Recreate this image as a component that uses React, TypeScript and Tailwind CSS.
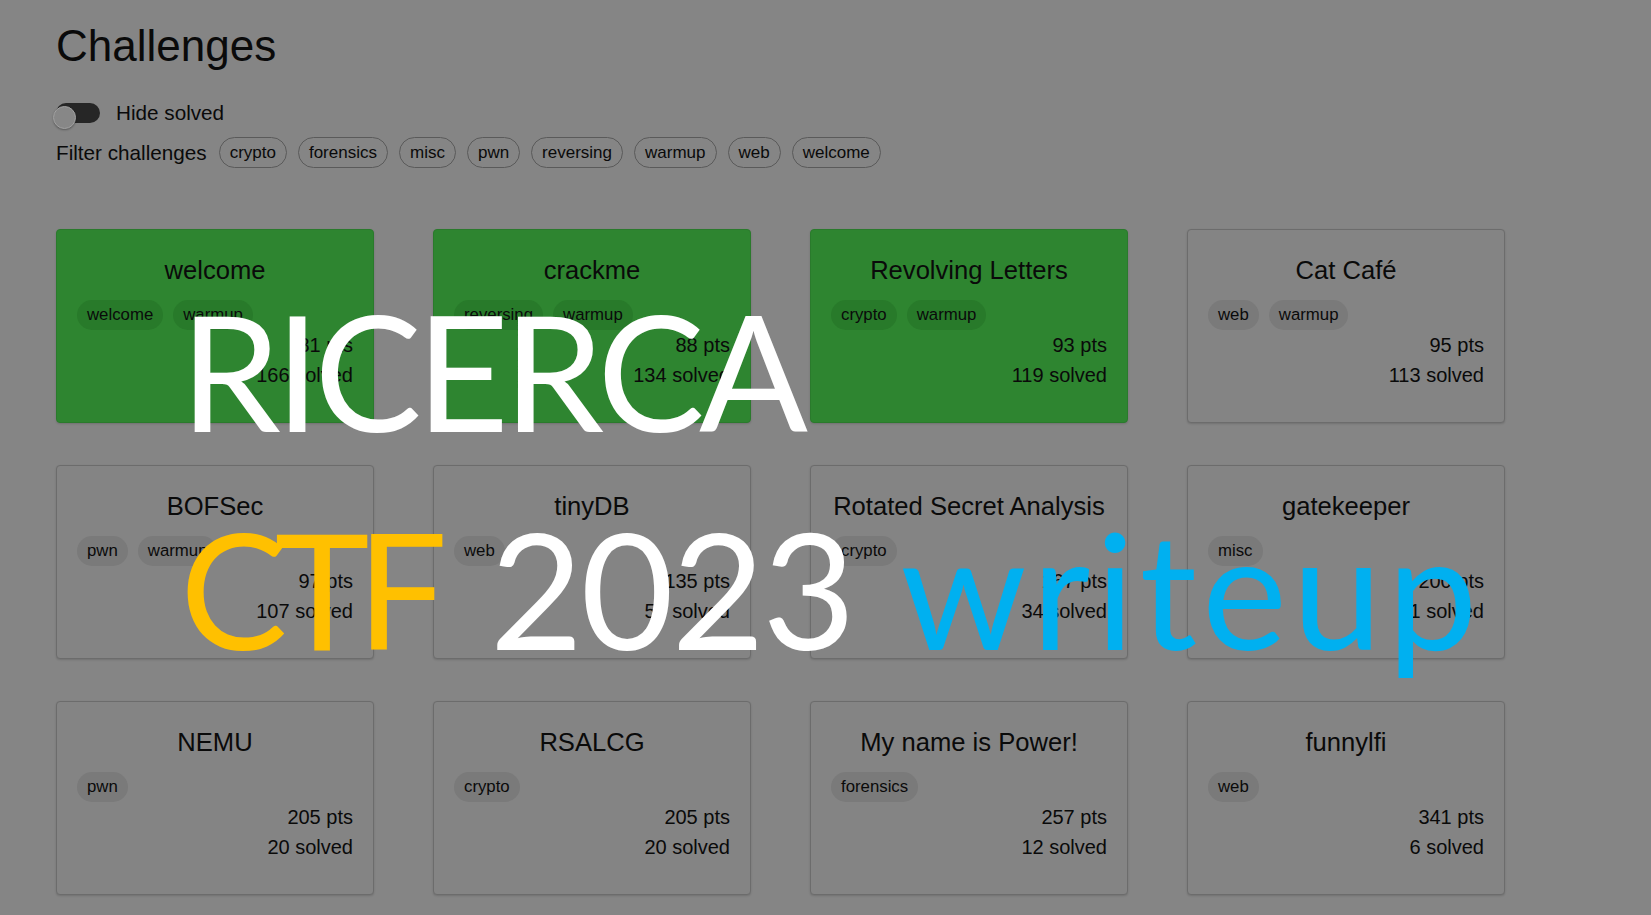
import React from "react";

type Card = { title: string; tags: string[]; pts: string; solved: string; done?: boolean };

const cards: Card[] = [
  { title: "welcome", tags: ["welcome", "warmup"], pts: "81", solved: "166", done: true },
  { title: "crackme", tags: ["reversing", "warmup"], pts: "88", solved: "134", done: true },
  { title: "Revolving Letters", tags: ["crypto", "warmup"], pts: "93", solved: "119", done: true },
  { title: "Cat Café", tags: ["web", "warmup"], pts: "95", solved: "113" },
  { title: "BOFSec", tags: ["pwn", "warmup"], pts: "97", solved: "107" },
  { title: "tinyDB", tags: ["web"], pts: "135", solved: "57" },
  { title: "Rotated Secret Analysis", tags: ["crypto"], pts: "167", solved: "34" },
  { title: "gatekeeper", tags: ["misc"], pts: "200", solved: "21" },
  { title: "NEMU", tags: ["pwn"], pts: "205", solved: "20" },
  { title: "RSALCG", tags: ["crypto"], pts: "205", solved: "20" },
  { title: "My name is Power!", tags: ["forensics"], pts: "257", solved: "12" },
  { title: "funnylfi", tags: ["web"], pts: "341", solved: "6" },
];

const filters = ["crypto", "forensics", "misc", "pwn", "reversing", "warmup", "web", "welcome"];

function ChallengeCard({ c }: { c: Card }) {
  return (
    <div
      className={
        "h-[194px] rounded-[4px] border px-[20px] pt-[21px] shadow-[0_1px_2px_rgba(0,0,0,0.15)] " +
        (c.done ? "bg-[#2e8530] border-[#2a7a2c]" : "bg-[#848484] border-[#6c6c6c]")
      }
    >
      <div className="text-center text-[25.6px] leading-[38px] text-[#0a0a0a] whitespace-nowrap">{c.title}</div>
      <div className="mt-[11px] flex gap-[10px]">
        {c.tags.map((t) => (
          <span
            key={t}
            className={
              "h-[30px] rounded-full px-[10px] text-[16.8px] leading-[30px] text-[#0a0a0a] " +
              (c.done ? "bg-[#287a2a]" : "bg-[#7a7a7a]")
            }
          >
            {t}
          </span>
        ))}
      </div>
      <div className="text-right text-[20px] leading-[30px] text-[#0a0a0a]">{c.pts} pts</div>
      <div className="text-right text-[20px] leading-[30px] text-[#0a0a0a]">{c.solved} solved</div>
    </div>
  );
}

export default function App() {
  return (
    <div
      className="relative h-[915px] w-[1651px] overflow-hidden bg-[#858585] text-[#0a0a0a]"
      style={{ fontFamily: '"Liberation Sans", Arial, sans-serif' }}
    >
      <div className="px-[56px] pt-[21px]">
        <h1 className="h-[50px] text-[44px] leading-[50px]">Challenges</h1>
        <div className="mt-[26.5px] flex h-[30px] items-center gap-[16px]">
          <div className="relative h-[20px] w-[44px] rounded-full bg-[#262626]">
            <div className="absolute left-[-3px] top-[3px] h-[23px] w-[23px] rounded-full border border-[#a2a2a2] bg-[#878787] shadow-[0_1px_2px_rgba(0,0,0,0.3)]" />
          </div>
          <span className="text-[20.7px] leading-[30px]">Hide solved</span>
        </div>
        <div className="mt-[9.5px] flex h-[31px] items-center">
          <span className="mr-[12px] text-[20.7px] leading-[30px]">Filter challenges</span>
          <div className="flex gap-[11px]">
            {filters.map((f) => (
              <span
                key={f}
                className="h-[31px] rounded-full border border-[#5a5a5a] px-[10px] text-[17px] leading-[29px]"
              >
                {f}
              </span>
            ))}
          </div>
        </div>
        <div className="mt-[61px] grid grid-cols-[repeat(4,318px)] gap-x-[59px] gap-y-[42px]">
          {cards.map((c) => (
            <ChallengeCard key={c.title} c={c} />
          ))}
        </div>
      </div>

      <div
        className="pointer-events-none absolute left-[180px] top-[261px] whitespace-nowrap text-[161px] leading-[218px] text-white"
        style={{ fontFamily: "Lato, 'Open Sans', sans-serif" }}
      >
        <div className="tracking-[-5.8px]">RICERCA</div>
        <div className="flex">
          <span className="text-[#ffc000] tracking-[-13px]">CTF</span>
          <span className="ml-[55px] tracking-[-2.5px]">2023</span>
          <span className="ml-[47px] text-[#00b0f0] tracking-[5.2px]">writeup</span>
        </div>
      </div>
    </div>
  );
}
